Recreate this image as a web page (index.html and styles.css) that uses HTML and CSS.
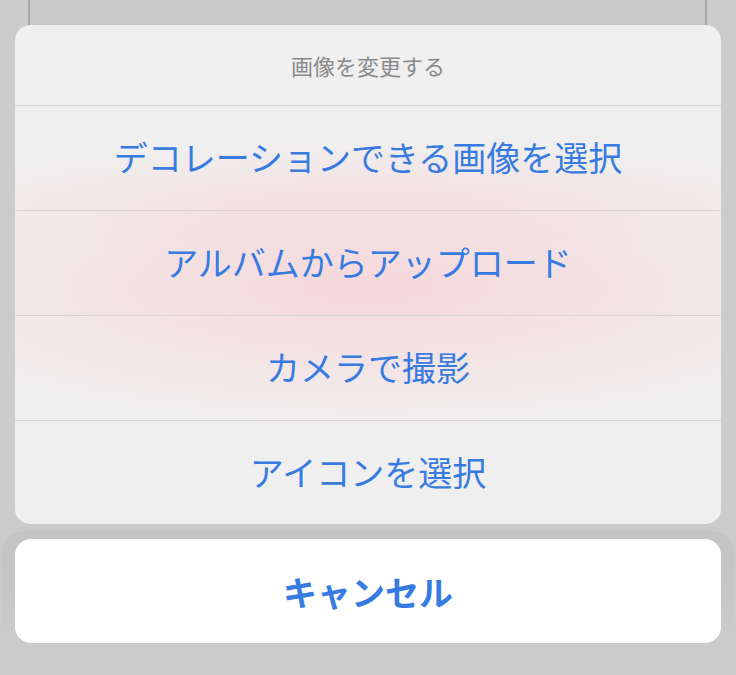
FILE: index.html
```html
<!DOCTYPE html>
<html lang="ja">
<head>
<meta charset="utf-8">
<link rel="stylesheet" href="styles.css">
</head>
<body>
<div class="backdrop">
  <div class="behind"></div>
</div>
<div class="sheet">
  <div class="title">画像を変更する</div>
  <div class="option">デコレーションできる画像を選択</div>
  <div class="option">アルバムからアップロード</div>
  <div class="option">カメラで撮影</div>
  <div class="option last">アイコンを選択</div>
</div>
<div class="cancel-wrap">
  <div class="cancel">キャンセル</div>
</div>
</body>
</html>
```
FILE: styles.css
```css
html, body {
  margin: 0;
  padding: 0;
  background: #cbcbcb;
  width: 736px;
  height: 675px;
  overflow: hidden;
  font-family: "Noto Sans CJK JP", "Noto Sans", sans-serif;
}
.backdrop {
  height: 25px;
  padding-left: 28px;
}
.behind {
  width: 675px;
  height: 25px;
  border-left: 2px solid #a9a9a9;
  border-right: 2px solid #a9a9a9;
  background: #c9c9c9;
}
.sheet {
  margin: 0 15px;
  border-radius: 15px;
  overflow: hidden;
  background:
    radial-gradient(ellipse 520px 140px at 50% 262px, rgba(246, 214, 217, 0.95), rgba(240, 239, 239, 0) 100%),
    radial-gradient(ellipse 480px 60px at 50% 175px, rgba(244, 222, 224, 0.6), rgba(240, 239, 239, 0) 100%),
    #f0efef;
}
.title {
  height: 80px;
  display: flex;
  align-items: center;
  justify-content: center;
  font-size: 22px;
  color: #8a8a8a;
}
.option {
  height: 104px;
  padding-bottom: 3px;
  box-sizing: border-box;
  border-top: 1px solid #d8d2d3;
  display: flex;
  align-items: center;
  justify-content: center;
  font-size: 34px;
  color: #377be0;
}
.option {
  height: 105px;
}
.option.last {
  height: 104px;
}
.cancel-wrap {
  margin: 7px 2px 0;
  padding: 8px 13px 30px;
  border-radius: 22px;
  background: linear-gradient(#c4c4c4, #c6c6c6 40%, #cbcbcb 80%);
}
.cancel {
  height: 104px;
  background: #ffffff;
  border-radius: 16px;
  display: flex;
  align-items: center;
  justify-content: center;
  font-size: 34px;
  font-weight: 700;
  color: #377be0;
}
```
